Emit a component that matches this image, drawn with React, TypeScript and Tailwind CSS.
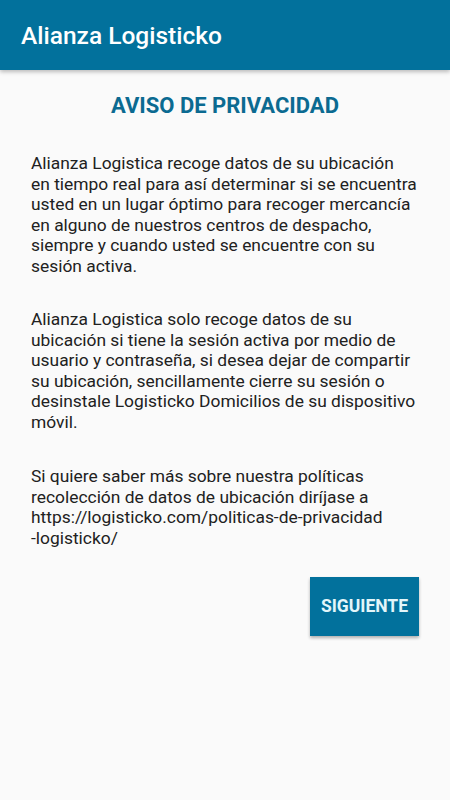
import React from "react";

const P1 = [
  "Alianza Logistica recoge datos de su ubicación",
  "en tiempo real para así determinar si se encuentra",
  "usted en un lugar óptimo para recoger mercancía",
  "en alguno de nuestros centros de despacho,",
  "siempre y cuando usted se encuentre con su",
  "sesión activa.",
];
const P2 = [
  "Alianza Logistica solo recoge datos de su",
  "ubicación si tiene la sesión activa por medio de",
  "usuario y contraseña, si desea dejar de compartir",
  "su ubicación, sencillamente cierre su sesión o",
  "desinstale Logisticko Domicilios de su dispositivo",
  "móvil.",
];
const P3 = [
  "Si quiere saber más sobre nuestra políticas",
  "recolección de datos de ubicación diríjase a",
  "https://logisticko.com/politicas-de-privacidad",
  "-logisticko/",
];

function Para({ lines, className }: { lines: string[]; className?: string }) {
  return (
    <div className={"text-[17.4px] leading-[20.5px] text-[#212121] " + (className ?? "")}>
      {lines.map((l, i) => (
        <div key={i} className="whitespace-nowrap">
          {l}
        </div>
      ))}
    </div>
  );
}

export default function App() {
  return (
    <div
      className="w-[450px] h-[800px] bg-[#fafafa] flex flex-col overflow-hidden"
      style={{ fontFamily: "Roboto, 'Noto Sans', sans-serif" }}
    >
      <header className="h-[70px] bg-[#02719c] flex items-center pl-[21px] pt-[3px] shadow-[0_2px_4px_rgba(0,0,0,0.25)] relative z-10">
        <span className="text-white text-[24.5px] font-medium leading-none">Alianza Logisticko</span>
      </header>
      <main className="flex flex-col px-[31px]">
        <h1 className="mt-[23px] text-center text-[22px] font-bold text-[#0b6a91] leading-[26px]">
          AVISO DE PRIVACIDAD
        </h1>
        <Para lines={P1} className="mt-[34px]" />
        <Para lines={P2} className="mt-[33px]" />
        <Para lines={P3} className="mt-[34px]" />
        <div className="flex justify-end mt-[29px]">
          <button className="w-[109px] h-[59px] bg-[#02719c] text-[#e3f6fa] text-[17.5px] font-bold shadow-[0_2px_3px_rgba(0,0,0,0.3)]">
            SIGUIENTE
          </button>
        </div>
      </main>
    </div>
  );
}
